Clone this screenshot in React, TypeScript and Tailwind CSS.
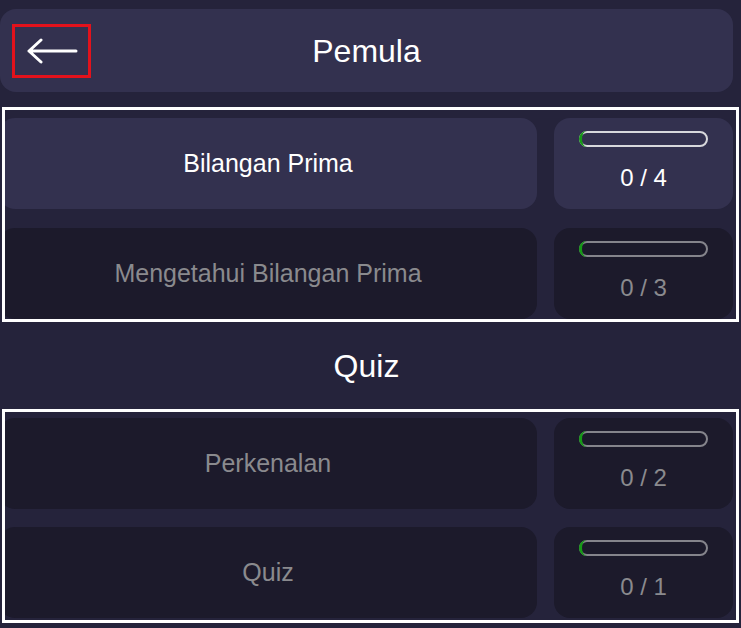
import React from "react";

type Row = { label: string; done: number; total: number; active?: boolean };

function Progress({ active }: { active?: boolean }) {
  return (
    <div
      className={
        "relative h-[16px] w-full rounded-full border-2 " +
        (active ? "border-[#d8d8dc]" : "border-[#85848c]")
      }
    >
      <div className="absolute -left-[2px] -top-[2px] -bottom-[2px] w-[10px] rounded-l-full border-l-[3px] border-[#169a16]" />
    </div>
  );
}

function RowItem({ row }: { row: Row }) {
  const bg = row.active ? "bg-[#33314f]" : "bg-[#1c1a2b]";
  const txt = row.active ? "text-white" : "text-[#8a8a8e]";
  return (
    <div className="flex h-[91px] gap-[17px]">
      <div
        className={`flex w-[538px] shrink-0 items-center justify-center rounded-2xl ${bg} ${txt} text-[25px]`}
      >
        {row.label}
      </div>
      <div
        className={`flex w-[179px] shrink-0 flex-col items-center rounded-2xl ${bg} px-[25px] pt-[13px]`}
      >
        <Progress active={row.active} />
        <div className={`mt-[15px] text-[24px] leading-[32px] ${txt}`}>
          {row.done} / {row.total}
        </div>
      </div>
    </div>
  );
}

function Frame({ rows, pt, gap }: { rows: Row[]; pt: string; gap: string }) {
  return (
    <div
      className={`ml-[2px] w-[737px] overflow-hidden border-[3px] border-white ${pt}`}
    >
      <div className={`-ml-[6px] flex flex-col ${gap}`}>
        {rows.map((r) => (
          <RowItem key={r.label} row={r} />
        ))}
      </div>
    </div>
  );
}

export default function App() {
  return (
    <div
      className="min-h-screen w-[741px] overflow-hidden bg-[#25233b] pt-[9px]"
      style={{ fontFamily: '"Liberation Sans", Arial, sans-serif' }}
    >
      <div className="flex h-[83px] w-[733px] items-center rounded-2xl bg-[#33314f]">
        <button className="ml-[12px] flex h-[54px] w-[79px] shrink-0 items-center justify-center border-[3px] border-[#e3121c]">
          <svg width="52" height="26" viewBox="0 0 52 26" fill="none">
            <path
              d="M3 13 H50 M3 13 L15 2 M3 13 L15 24"
              stroke="white"
              strokeWidth="3"
              strokeLinecap="round"
              strokeLinejoin="round"
            />
          </svg>
        </button>
        <div className="flex-1 text-center text-[32px] text-white">Pemula</div>
        <div className="w-[91px] shrink-0" />
      </div>

      <div className="mt-[15px]">
        <Frame
          pt="pt-[8px]"
          gap="gap-[19px]"
          rows={[
            { label: "Bilangan Prima", done: 0, total: 4, active: true },
            { label: "Mengetahui Bilangan Prima", done: 0, total: 3 },
          ]}
        />
      </div>

      <div className="flex h-[87px] w-[733px] items-center justify-center text-[32px] text-white">
        Quiz
      </div>

      <Frame
        pt="pt-[6px] pb-[2px]"
        gap="gap-[18px]"
        rows={[
          { label: "Perkenalan", done: 0, total: 2 },
          { label: "Quiz", done: 0, total: 1 },
        ]}
      />
    </div>
  );
}
